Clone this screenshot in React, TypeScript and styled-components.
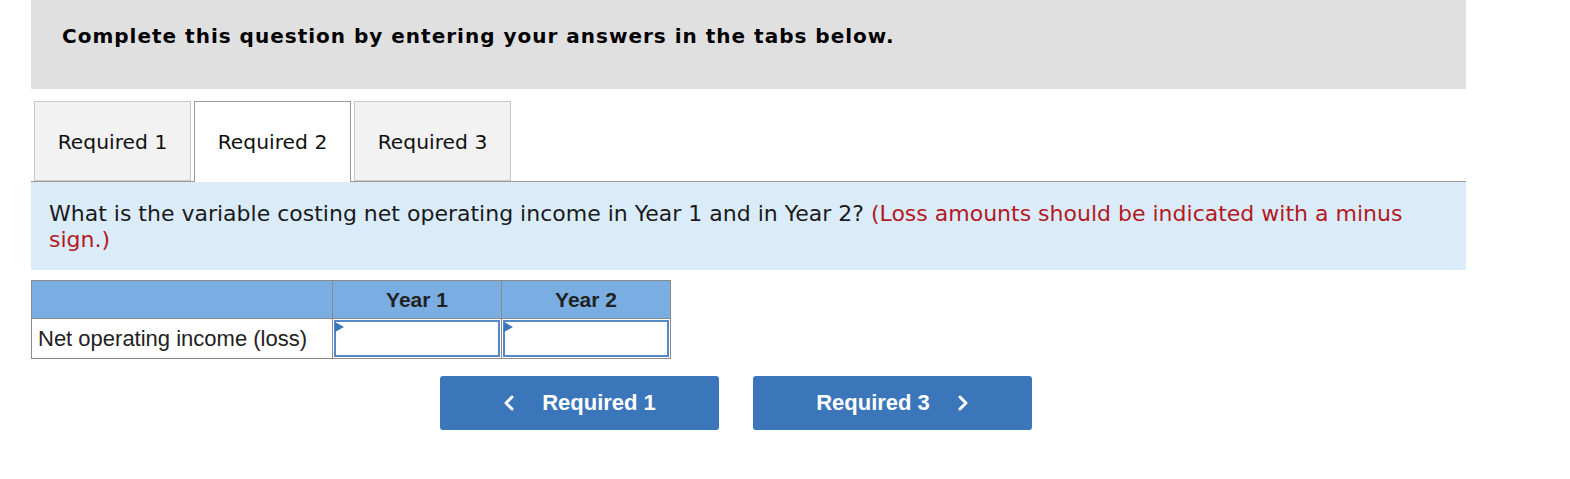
import React from 'react';
import styled, { createGlobalStyle } from 'styled-components';

const GlobalStyle = createGlobalStyle`
  html, body {
    margin: 0;
    padding: 0;
    background: #ffffff;
  }
  body {
    font-family: 'DejaVu Sans', Verdana, sans-serif;
    color: #000;
  }
`;

const Page = styled.div`
  width: 1435px;
  margin-left: 31px;
  box-sizing: border-box;
`;

const Banner = styled.div`
  height: 89px;
  background-color: #e0e0e0;
  padding: 24px 0 0 31px;
  box-sizing: border-box;
  font-weight: bold;
  font-size: 20px;
  letter-spacing: 1px;
  line-height: 24px;
  color: #000;
`;

const TabBar = styled.div`
  display: flex;
  margin-top: 12px;
  padding-left: 3px;
  border-bottom: 1px solid #999999;
  height: 80px;
`;

const Tab = styled.div<{ $active?: boolean }>`
  width: 157px;
  height: ${(p) => (p.$active ? '81px' : '80px')};
  margin-right: 3px;
  box-sizing: border-box;
  display: flex;
  align-items: center;
  justify-content: center;
  font-size: 20.3px;
  color: #111;
  background-color: ${(p) => (p.$active ? '#ffffff' : '#f2f2f2')};
  border: 1px solid ${(p) => (p.$active ? '#9a9a9a' : '#c8c8c8')};
  border-bottom: ${(p) => (p.$active ? 'none' : '1px solid #c8c8c8')};
  padding-top: 2px;
  padding-bottom: ${(p) => (p.$active ? '2px' : '0')};
  position: relative;
  z-index: 1;
`;

const Question = styled.div`
  background-color: #daecfa;
  padding: 19px 40px 17px 18px;
  font-size: 22px;
  line-height: 26px;
  color: #1a1a1a;
`;

const Hint = styled.span`
  color: #b3191f;
`;

const Grid = styled.table`
  margin-top: 10px;
  border-collapse: collapse;
  width: 636px;
  font-family: 'Liberation Sans', Arial, sans-serif;
  font-size: 22px;
  border: 1px solid #8a8a8a;
  table-layout: fixed;
`;

const HeadCell = styled.th<{ $w: number }>`
  width: ${(p) => p.$w}px;
  height: 37px;
  padding: 0;
  background-color: #7aaee3;
  border: 1px solid #8a8a8a;
  font-weight: bold;
  font-size: 21px;
  color: #222;
  text-align: center;
  vertical-align: middle;
`;

const LabelCell = styled.td`
  height: 38px;
  padding: 0 0 0 6px;
  border: 1px solid #8a8a8a;
  color: #222;
  white-space: nowrap;
  vertical-align: middle;
`;

const InputCell = styled.td`
  padding: 1px;
  border: 1px solid #8a8a8a;
  position: relative;
`;

const Field = styled.div`
  height: 37px;
  box-sizing: border-box;
  border: 2px solid #5588c7;
  background: #fff;
`;

const Marker = styled.span`
  position: absolute;
  left: 2px;
  top: 3px;
  width: 0;
  height: 0;
  border-top: 5px solid transparent;
  border-bottom: 5px solid transparent;
  border-left: 9px solid #3b76bb;
`;

const NavRow = styled.div`
  display: flex;
  gap: 34px;
  margin-top: 17px;
  padding-left: 409px;
`;

const NavButton = styled.button`
  width: 279px;
  height: 54px;
  border: none;
  border-radius: 3px;
  background-color: #3b76bb;
  color: #fff;
  font-family: 'Liberation Sans', Arial, sans-serif;
  font-weight: bold;
  font-size: 22px;
  display: flex;
  align-items: center;
  justify-content: center;
  gap: 27px;
  cursor: pointer;
  padding: 0;
`;

const Chevron = ({ dir }: { dir: 'left' | 'right' }) => (
  <svg width="12" height="16" viewBox="0 0 12 16">
    <polyline
      points={dir === 'left' ? '9,2 3,8 9,14' : '3,2 9,8 3,14'}
      fill="none"
      stroke="#fff"
      strokeWidth="3"
      strokeLinecap="round"
      strokeLinejoin="round"
    />
  </svg>
);

export default function App() {
  return (
    <Page>
      <GlobalStyle />
      <Banner>Complete this question by entering your answers in the tabs below.</Banner>
      <TabBar>
        <Tab>Required 1</Tab>
        <Tab $active>Required 2</Tab>
        <Tab>Required 3</Tab>
      </TabBar>
      <Question>
        What is the variable costing net operating income in Year 1 and in Year 2?{' '}
        <Hint>(Loss amounts should be indicated with a minus sign.)</Hint>
      </Question>
      <Grid>
        <thead>
          <tr>
            <HeadCell $w={300}></HeadCell>
            <HeadCell $w={168}>Year 1</HeadCell>
            <HeadCell $w={168}>Year 2</HeadCell>
          </tr>
        </thead>
        <tbody>
          <tr>
            <LabelCell>Net operating income (loss)</LabelCell>
            <InputCell>
              <Field />
              <Marker />
            </InputCell>
            <InputCell>
              <Field />
              <Marker />
            </InputCell>
          </tr>
        </tbody>
      </Grid>
      <NavRow>
        <NavButton>
          <Chevron dir="left" />
          Required 1
        </NavButton>
        <NavButton>
          Required 3
          <Chevron dir="right" />
        </NavButton>
      </NavRow>
    </Page>
  );
}
